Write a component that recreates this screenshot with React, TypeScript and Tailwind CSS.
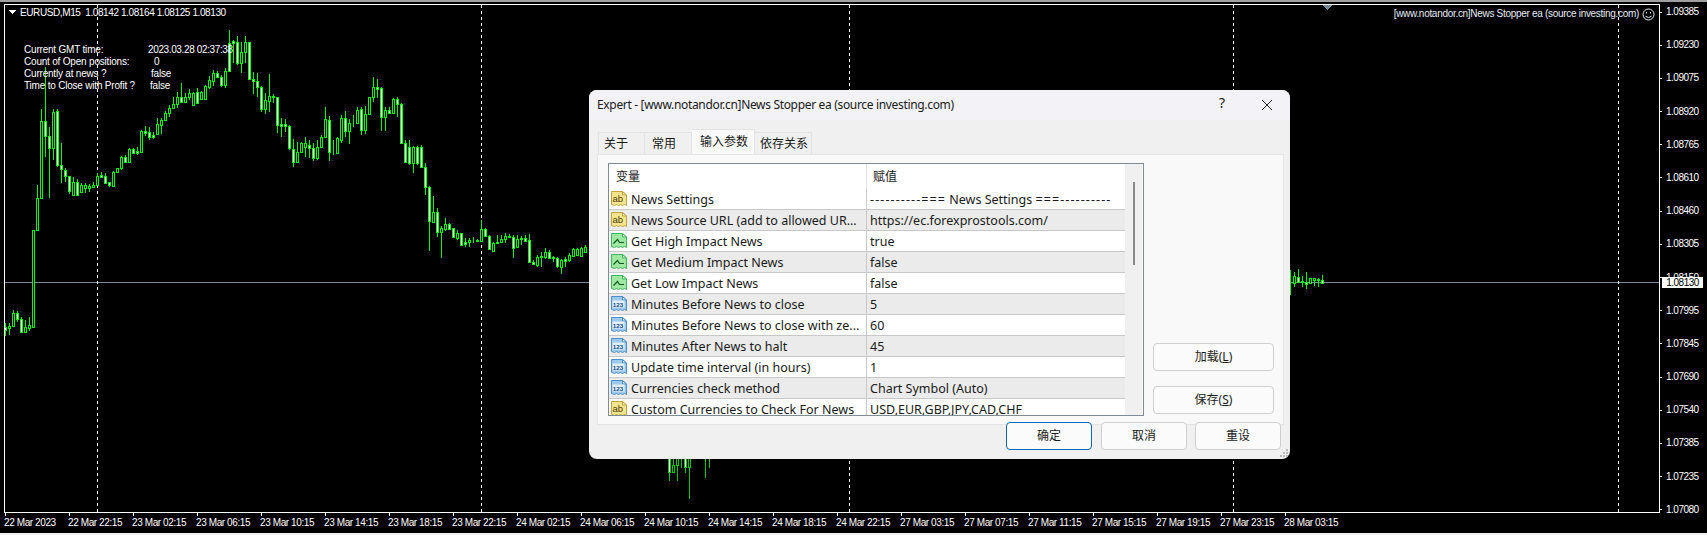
import React from "react";

const raw: number[][] = [
[595,690,0,555,690],[363,595,0,328,595],[363,408,1,200,470],[408,443,1,380,595],[335,445,0,328,480],[333,495,1,328,500],[495,508,1,430,548],[510,527,1,505,545],[528,573,1,528,582],[545,585,0,530,585],[545,585,1,538,588],[555,575,0,550,578],[555,565,0,550,578],[557,563,0,552,575],[555,560,0,545,565],[527,555,0,520,557],[525,530,1,515,535],[527,548,1,518,552],[547,556,1,545,562],[517,557,0,512,557],[505,517,0,503,520],[470,505,0,468,510],[470,487,1,465,490],[448,487,0,445,490],[448,458,1,445,460],[453,458,1,440,465],[392,455,0,390,460],[392,400,1,378,408],[397,412,1,380,420],[405,412,1,395,418],[373,403,0,355,405],[360,375,0,355,403],[340,360,0,332,362],[325,340,0,315,352],[313,325,0,290,328],[290,313,0,275,325],[290,307,1,248,310],[292,307,0,280,310],[280,290,0,268,300],[280,315,0,275,318],[275,310,1,265,312],[275,297,0,272,300],[258,297,0,255,298],[240,262,0,228,268],[220,242,0,210,258],[220,230,1,212,235],[230,255,1,225,262],[212,255,0,205,265],[130,212,1,90,215],[123,130,1,120,190],[125,188,1,108,195],[155,188,0,125,218],[127,157,0,108,188],[127,237,1,125,240],[237,243,1,215,282],[243,260,1,218,290],[260,327,1,258,335],[300,327,0,278,342],[287,302,0,222,335],[287,292,1,282,310],[292,375,1,290,400],[373,377,1,355,410],[373,377,1,358,395],[377,445,1,375,450],[448,485,1,418,500],[457,485,0,425,488],[430,457,0,425,460],[430,440,0,410,470],[435,445,1,420,475],[445,475,1,428,482],[442,475,0,420,480],[410,442,0,405,445],[358,412,0,322,415],[360,457,1,348,482],[458,460,1,420,465],[415,460,0,412,462],[355,420,0,345,428],[355,392,1,332,410],[370,392,0,358,432],[368,370,1,345,380],[330,368,0,322,372],[328,390,1,322,405],[342,390,0,318,402],[292,342,0,292,345],[262,292,0,232,305],[262,268,1,238,295],[265,350,1,262,392],[330,350,0,322,392],[330,340,1,322,342],[298,340,0,295,342],[298,313,1,290,352],[313,428,1,310,430],[428,485,1,420,488],[440,488,1,420,495],[440,488,0,438,518],[440,490,1,438,495],[440,500,1,435,500],[500,560,1,490,585],[560,662,1,558,752],[637,665,0,588,668],[637,695,1,625,710],[683,695,0,678,775],[673,688,0,655,692],[673,687,1,668,690],[685,712,1,683,715],[700,715,0,690,720],[700,735,1,698,738],[727,733,1,715,740],[720,727,0,715,740],[722,724,0,712,728],[720,724,0,718,726],[688,722,0,660,725],[688,708,1,685,710],[708,748,1,705,750],[728,752,0,725,755],[727,728,1,705,730],[718,727,0,705,730],[708,718,0,700,728],[708,712,0,702,715],[710,743,1,705,775],[718,742,0,705,745],[715,718,1,708,735],[715,722,1,705,725],[720,785,1,702,790],[785,792,1,780,795],[770,795,0,765,800],[768,772,1,755,800],[755,772,0,745,778],[755,775,1,750,778],[772,773,1,768,785],[775,798,1,770,805],[780,800,0,778,822],[778,782,1,770,800],[765,780,0,760,785],[748,768,0,745,770],[748,765,0,745,768],[745,768,0,740,772],[740,755,0,735,760],
];

type C = { x: number; t: number; b: number; w: number; wt: number; wb: number };
const candles: C[] = [
  { x: 5, t: 327, b: 330, w: 1, wt: 323, wb: 336 },
  { x: 9, t: 326, b: 328, w: 0, wt: 323, wb: 335 },
  { x: 13, t: 313, b: 326, w: 0, wt: 310, wb: 327 },
  { x: 17, t: 313, b: 319, w: 1, wt: 311, wb: 322 },
  { x: 21, t: 319, b: 332, w: 1, wt: 317, wb: 332 },
  { x: 25, t: 327, b: 332, w: 0, wt: 320, wb: 333 },
  { x: 29, t: 325, b: 328, w: 0, wt: 317, wb: 331 },
  { x: 33, t: 230, b: 327, w: 0, wt: 230, wb: 328 },
  ...raw.map((r, i) => ({
    x: 37 + 4 * i,
    t: Math.round(r[0] / 3),
    b: Math.round(r[1] / 3),
    w: r[2],
    wt: Math.round(r[3] / 3),
    wb: Math.round(r[4] / 3),
  })),
  // below the dialog
  { x: 669, t: 440, b: 472, w: 1, wt: 440, wb: 481 },
  { x: 673, t: 465, b: 472, w: 0, wt: 440, wb: 472 },
  { x: 677, t: 440, b: 465, w: 0, wt: 440, wb: 481 },
  { x: 681, t: 440, b: 440, w: 0, wt: 440, wb: 468 },
  { x: 685, t: 440, b: 467, w: 1, wt: 440, wb: 473 },
  { x: 689, t: 440, b: 467, w: 0, wt: 440, wb: 499 },
  { x: 705, t: 440, b: 440, w: 0, wt: 440, wb: 478 },
  { x: 709, t: 440, b: 440, w: 0, wt: 440, wb: 468 },
  // right of the dialog
  { x: 1290, t: 285, b: 285, w: 0, wt: 270, wb: 295 },
  { x: 1294, t: 276, b: 283, w: 0, wt: 272, wb: 287 },
  { x: 1298, t: 277, b: 282, w: 1, wt: 269, wb: 283 },
  { x: 1302, t: 281, b: 282, w: 1, wt: 276, wb: 287 },
  { x: 1306, t: 282, b: 284, w: 1, wt: 272, wb: 289 },
  { x: 1310, t: 278, b: 283, w: 0, wt: 278, wb: 284 },
  { x: 1314, t: 278, b: 280, w: 0, wt: 278, wb: 286 },
  { x: 1318, t: 279, b: 280, w: 0, wt: 278, wb: 287 },
  { x: 1322, t: 280, b: 283, w: 1, wt: 275, wb: 283 },
];

function Chart() {
  return (
    <svg className="absolute inset-0" width={1707} height={535} viewBox="0 0 1707 535" shapeRendering="crispEdges">
      <line x1={5} x2={1659} y1={282.5} y2={282.5} stroke="#778899" />
      {[97, 481, 849, 1233, 1618].map((x) => (
        <line key={x} x1={x + 0.5} x2={x + 0.5} y1={5} y2={512} stroke="#fff" strokeDasharray="3 3" />
      ))}
      {candles.map((c, i) => {
        const g = c.x > 660 && c.x < 715 ? "#00c800" : "#00ff00";
        return (
          <g key={i}>
            <rect x={c.x} y={c.wt} width={1} height={Math.max(1, c.wb - c.wt)} fill={g} />
            {c.b > c.t && (
              <>
                <rect x={c.x - 1} y={c.t} width={3} height={c.b - c.t + 1} fill={g} />
                {c.b - c.t > 1 && (
                  <rect x={c.x} y={c.t + 1} width={1} height={c.b - c.t - 1} fill={c.w ? "#fff" : "#000"} />
                )}
              </>
            )}
          </g>
        );
      })}
      <polygon points="8,10 16,10 12,14" fill="#fff" />
      <polygon points="1322,5 1332,5 1327,10" fill="#778899" />
      <g shapeRendering="auto" fill="none" stroke="#e8eef4">
        <circle cx={1648.5} cy={14.5} r={5.5} />
        <path d="M1645.5 16.2 Q1648.5 19 1651.5 16.2" />
        <path d="M1646.5 12v1.5M1650.5 12v1.5" />
      </g>
    </svg>
  );
}

function Icon({ kind }: { kind: "ab" | "chart" | "num" }) {
  const p =
    kind === "ab"
      ? { fill: "#f6e58c", stroke: "#bfa43f", inner: "#fdf6c8" }
      : kind === "chart"
        ? { fill: "#9fe8a2", stroke: "#3fb65a", inner: "#e2fae2" }
        : { fill: "#9cc9ee", stroke: "#4f8fc9", inner: "#dcebf9" };
  return (
    <svg width={16} height={16} viewBox="0 0 16 16" className="shrink-0">
      <path
        d="M.5 .5h11l4 3.5v10.5l-2-1-2 1-2-1-2 1-2-1-2 1-3-1z"
        fill={p.fill}
        stroke={p.stroke}
        strokeLinejoin="round"
      />
      <path d="M11.5 .5v3.5h4z" fill={p.inner} stroke={p.stroke} strokeLinejoin="round" />
      {kind === "ab" && (
        <text x={1.4} y={11} fontSize={9.5} fontFamily="'Liberation Sans',sans-serif" fill="#4a3b08">
          ab
        </text>
      )}
      {kind === "num" && (
        <>
          <rect x={1.5} y={4.5} width={12} height={7} fill="#e2effa" />
          <text x={1.8} y={10.5} fontSize={6.2} fontWeight={700} fontFamily="'Liberation Sans',sans-serif" fill="#0f4c8a">
            123
          </text>
        </>
      )}
      {kind === "chart" && <path d="M2.5 10.5l4-4 2 3h4.5" fill="none" stroke="#0c5a1c" strokeWidth={1.2} />}
    </svg>
  );
}

const rows: [("ab" | "chart" | "num"), React.ReactNode, React.ReactNode][] = [
  [
    "ab",
    "News Settings",
    <span>
      <span className="tracking-[1.1px]">----------===</span> News Settings <span className="tracking-[1.1px]">===----------</span>
    </span>,
  ],
  ["ab", "News Source URL (add to allowed UR...", "https://ec.forexprostools.com/"],
  ["chart", "Get High Impact News", "true"],
  ["chart", "Get Medium Impact News", "false"],
  ["chart", "Get Low Impact News", "false"],
  ["num", "Minutes Before News to close", "5"],
  ["num", "Minutes Before News to close with ze...", "60"],
  ["num", "Minutes After News to halt", "45"],
  ["num", "Update time interval (in hours)", "1"],
  ["num", "Currencies check method", "Chart Symbol (Auto)"],
  ["ab", "Custom Currencies to Check For News", "USD,EUR,GBP,JPY,CAD,CHF"],
];

const prices = ["1.09385","1.09230","1.09075","1.08920","1.08765","1.08610","1.08460","1.08305","1.08150","1.07995","1.07845","1.07690","1.07540","1.07385","1.07235","1.07080"];
const times = ["22 Mar 2023","22 Mar 22:15","23 Mar 02:15","23 Mar 06:15","23 Mar 10:15","23 Mar 14:15","23 Mar 18:15","23 Mar 22:15","24 Mar 02:15","24 Mar 06:15","24 Mar 10:15","24 Mar 14:15","24 Mar 18:15","24 Mar 22:15","27 Mar 03:15","27 Mar 07:15","27 Mar 11:15","27 Mar 15:15","27 Mar 19:15","27 Mar 23:15","28 Mar 03:15"];

const uiFont = "font-['Noto_Sans','Noto_Sans_CJK_SC',sans-serif]";

function Btn({ children, primary, w }: { children: React.ReactNode; primary?: boolean; w: string }) {
  return (
    <div
      className={`${w} h-[28px] shrink-0 flex items-center justify-center rounded-[4px] text-[12px] text-[#1a1a1a] bg-[#fbfbfb] border ${
        primary ? "border-[#0067c0]" : "border-[#cfcfcf]"
      }`}
    >
      {children}
    </div>
  );
}

function Dialog() {
  return (
    <div className={`absolute left-[589px] top-[90px] w-[701px] h-[369px] rounded-[8px] overflow-hidden bg-[#f0f0f0] flex flex-col text-[#1a1a1a] ${uiFont}`}>
      <div className="h-[30px] shrink-0 bg-[#f3f2f7] flex items-center pl-[8px] text-[12px] tracking-[-0.33px] relative">
        <span className="whitespace-nowrap">Expert - [www.notandor.cn]News Stopper ea (source investing.com)</span>
        <span className="absolute left-[630px] top-[6px] text-[14px]">?</span>
        <svg className="absolute left-[672px] top-[9px]" width={12} height={12} viewBox="0 0 12 12">
          <path d="M1 1l10 10M11 1L1 11" stroke="#222" strokeWidth={1} fill="none" />
        </svg>
      </div>
      <div className="flex items-end h-[34px] shrink-0 pl-[9px] text-[12px]">
        <div className="w-[47px] h-[22px] flex items-center pl-[5px] border border-b-0 border-[#e3e3e3]">关于</div>
        <div className="w-[47px] h-[22px] flex items-center pl-[7px] border border-b-0 border-l-0 border-[#e3e3e3]">常用</div>
        <div className="w-[63px] h-[25px] flex items-center pl-[8px] bg-[#f9f9f9] border border-b-0 border-l-0 border-[#e3e3e3]">输入参数</div>
        <div className="w-[57px] h-[22px] flex items-center pl-[5px] border border-b-0 border-l-0 border-[#e3e3e3]">依存关系</div>
      </div>
      <div className="ml-[8px] mr-[6px] h-[271px] shrink-0 bg-[#f9f9f9] border border-[#e5e5e5] pl-[10px] pt-[8px] flex">
        <div className="w-[536px] h-[253px] shrink-0 border border-[#7f8b96] bg-white flex overflow-hidden text-[12.5px]">
          <div className="w-[516px] shrink-0 flex flex-col">
            <div className="h-[25px] shrink-0 flex text-[12px]">
              <div className="w-[258px] pl-[7px] flex items-center border-r border-[#e3e3e3]">变量</div>
              <div className="pl-[6px] flex items-center">赋值</div>
            </div>
            {rows.map(([k, a, b], i) => (
              <div
                key={i}
                className={`h-[21px] shrink-0 flex border-b border-[#c8c8c8] ${i % 2 ? "bg-[#ebebeb]" : "bg-white"}`}
              >
                <div className="w-[258px] shrink-0 flex items-center gap-[4px] pl-[2px] border-r border-[#c8c8c8] whitespace-nowrap">
                  <Icon kind={k} />
                  <span className="pt-[2px]">{a}</span>
                </div>
                <div className="pl-[3px] pt-[2px] flex items-center whitespace-nowrap">{b}</div>
              </div>
            ))}
          </div>
          <div className="w-[17px] bg-[#f0f0f0] flex justify-center pt-[18px]">
            <div className="w-[2px] h-[83px] bg-[#8a8a8a]" />
          </div>
        </div>
        <div className="ml-[9px] w-[121px] h-[251px] flex flex-col justify-end gap-[15px]">
          <Btn w="w-[121px]">加载(<u>L</u>)</Btn>
          <Btn w="w-[121px]">保存(<u>S</u>)</Btn>
        </div>
      </div>
      <div className="-mt-[3px] flex justify-end gap-[8px] pr-[9px] relative">
        <Btn primary w="w-[86px] mr-[1px]">确定</Btn>
        <Btn w="w-[86px]">取消</Btn>
        <Btn w="w-[86px]">重设</Btn>
      </div>
      <svg className="absolute right-[1px] bottom-[1px]" width={9} height={9} viewBox="0 0 9 9" fill="#b8b8b8">
        <rect x={6} y={0} width={2} height={2} />
        <rect x={3} y={3} width={2} height={2} />
        <rect x={6} y={3} width={2} height={2} />
        <rect x={0} y={6} width={2} height={2} />
        <rect x={3} y={6} width={2} height={2} />
        <rect x={6} y={6} width={2} height={2} />
      </svg>
    </div>
  );
}

export default function App() {
  return (
    <div className="relative w-[1707px] h-[535px] bg-black text-white overflow-hidden font-['Liberation_Sans',sans-serif] text-[10px] leading-none flex flex-col">
      <Chart />
      <div className="h-[2px] shrink-0 bg-[#a0a0a0]" />
      <div className="mt-[2px] ml-[4px] w-[1656px] h-[509px] shrink-0 border border-white relative flex items-start justify-between pt-[3px] pl-[15px] pr-[20px]">
        <span className="whitespace-pre tracking-[-0.4px]">EURUSD,M15  1.08142 1.08164 1.08125 1.08130</span>
        <span className="whitespace-nowrap text-[#e4edf5] pt-[1px] tracking-[-0.3px]">[www.notandor.cn]News Stopper ea (source investing.com)</span>
        <div className="absolute left-[19px] top-[39px] grid grid-cols-[124px_auto] auto-rows-[12px] items-center tracking-[-0.2px]">
          <span>Current GMT time:</span><span className="tracking-[-0.37px]">2023.03.28 02:37:38</span>
          <span>Count of Open positions:</span><span className="pl-[6px]">0</span>
          <span>Currently at news ?</span><span className="pl-[3px]">false</span>
          <span className="whitespace-nowrap">Time to Close with Profit ?</span><span className="pl-[2px]">false</span>
        </div>
      </div>
      <div className="flex ml-[1px] h-[18px] tracking-[-0.4px]">
        {times.map((t) => (
          <div key={t} className="w-[64px] shrink-0 relative pt-[5px] pl-[3px] whitespace-nowrap">
            <div className="absolute left-[4px] top-0 w-px h-[3px] bg-white" />
            {t}
          </div>
        ))}
      </div>
      <div className="h-[2px] bg-[#f0f0f0] mt-auto" />
      <div className="absolute left-[1659px] top-[6px] h-[510px] flex flex-col justify-between tracking-[-0.5px]">
        {prices.map((p) => (
          <div key={p} className="h-[12px] flex items-center gap-[4px]">
            <div className="w-[3px] h-px bg-white" />
            <span>{p}</span>
          </div>
        ))}
      </div>
      <div className="absolute left-[1662px] top-[277px] w-[41px] h-[11px] bg-white text-black flex items-center justify-center tracking-[-0.5px]">1.08130</div>
      <Dialog />
    </div>
  );
}
